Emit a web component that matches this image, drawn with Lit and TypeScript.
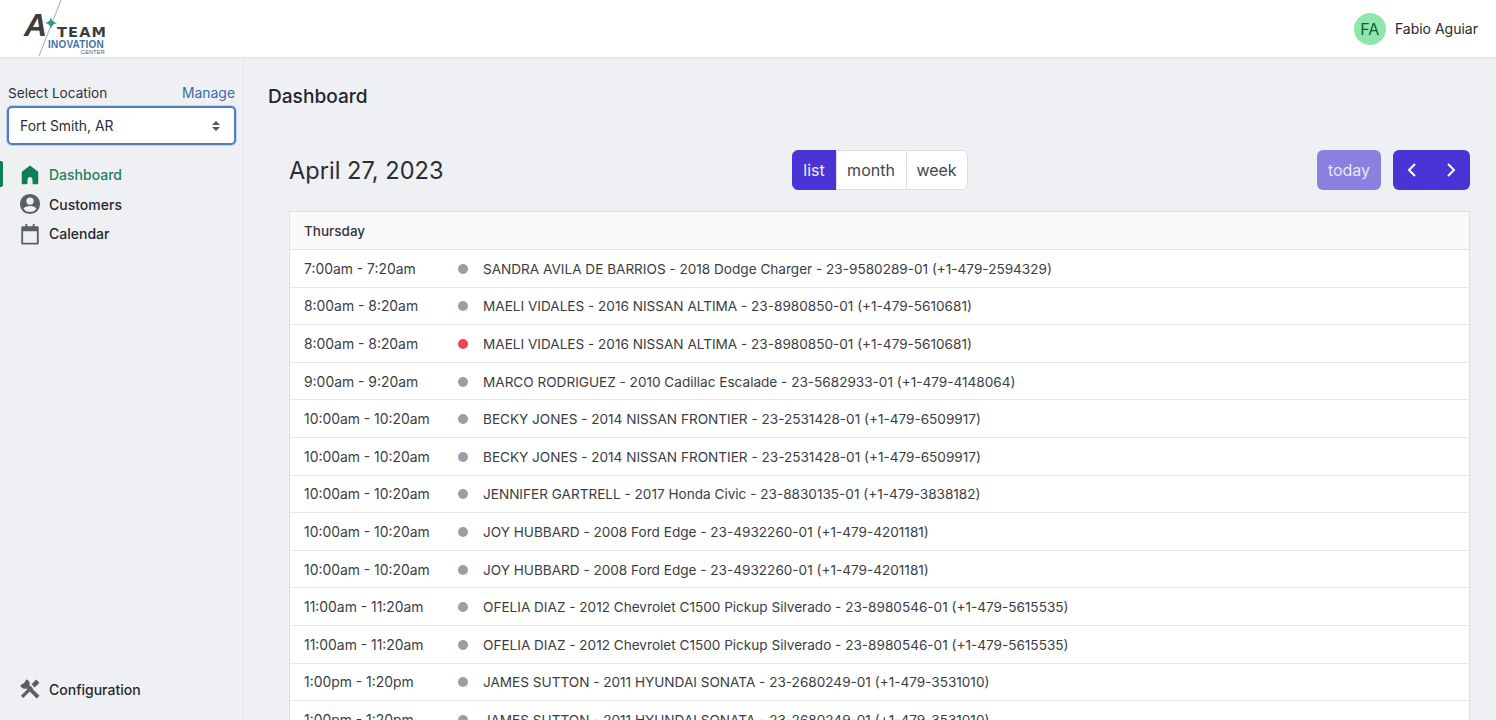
import { LitElement, html, css, svg } from "lit";
import { customElement } from "lit/decorators.js";

const rows: [string, string, boolean?][] = [
  ["7:00am - 7:20am", "SANDRA AVILA DE BARRIOS - 2018 Dodge Charger - 23-9580289-01 (+1-479-2594329)"],
  ["8:00am - 8:20am", "MAELI VIDALES - 2016 NISSAN ALTIMA - 23-8980850-01 (+1-479-5610681)"],
  ["8:00am - 8:20am", "MAELI VIDALES - 2016 NISSAN ALTIMA - 23-8980850-01 (+1-479-5610681)", true],
  ["9:00am - 9:20am", "MARCO RODRIGUEZ - 2010 Cadillac Escalade - 23-5682933-01 (+1-479-4148064)"],
  ["10:00am - 10:20am", "BECKY JONES - 2014 NISSAN FRONTIER - 23-2531428-01 (+1-479-6509917)"],
  ["10:00am - 10:20am", "BECKY JONES - 2014 NISSAN FRONTIER - 23-2531428-01 (+1-479-6509917)"],
  ["10:00am - 10:20am", "JENNIFER GARTRELL - 2017 Honda Civic - 23-8830135-01 (+1-479-3838182)"],
  ["10:00am - 10:20am", "JOY HUBBARD - 2008 Ford Edge - 23-4932260-01 (+1-479-4201181)"],
  ["10:00am - 10:20am", "JOY HUBBARD - 2008 Ford Edge - 23-4932260-01 (+1-479-4201181)"],
  ["11:00am - 11:20am", "OFELIA DIAZ - 2012 Chevrolet C1500 Pickup Silverado - 23-8980546-01 (+1-479-5615535)"],
  ["11:00am - 11:20am", "OFELIA DIAZ - 2012 Chevrolet C1500 Pickup Silverado - 23-8980546-01 (+1-479-5615535)"],
  ["1:00pm - 1:20pm", "JAMES SUTTON - 2011 HYUNDAI SONATA - 23-2680249-01 (+1-479-3531010)"],
  ["1:00pm - 1:20pm", "JAMES SUTTON - 2011 HYUNDAI SONATA - 23-2680249-01 (+1-479-3531010)"],
];

const homeIcon = svg`<path fill="currentColor" d="M12 1.500 3.400 8.300c-.3.2-.4.5-.4.8V21c0 .6.4 1 1 1h4.400c.5 0 .9-.4.9-.9v-4.300c0-1.500 1.200-2.700 2.700-2.700s2.700 1.200 2.700 2.700v4.300c0 .5.4.9.9.9H20c.6 0 1-.4 1-1V9.100c0-.3-.1-.6-.4-.8z"/>`;
const userIcon = svg`<path fill="currentColor" fill-rule="evenodd" d="M12 1a11 11 0 1 0 0 22 11 11 0 0 0 0-22zm0 3.800a4 4 0 1 1 0 8 4 4 0 0 1 0-8zm0 16c-3 0-5.500-1.400-7-3.600.1-1.700 4.300-3 7-3s6.900 1.300 7 3c-1.500 2.200-4 3.600-7 3.600z"/>`;
const calIcon = svg`<path fill="currentColor" fill-rule="evenodd" d="M7 1h2v2.500h6V1h2v2.500h3c.8 0 1.500.7 1.500 1.500v17c0 .8-.7 1.500-1.500 1.500H4c-.8 0-1.500-.7-1.500-1.500V5c0-.8.7-1.500 1.500-1.500h3zM4.500 9v12.500h15V9z"/>`;
const toolIcon = svg`<path fill="currentColor" d="M8 1.500 5.500 5.500 1.500 8c.5 3 3.500 4.500 7 3.500l3-3c1-3.500-.5-6.500-3.500-7z"/><path fill="none" stroke="currentColor" stroke-width="4.200" d="M8 8 20.800 20.800"/><path fill="none" stroke="currentColor" stroke-width="3.600" d="M3.400 20.600 14 10"/><path fill="none" stroke="currentColor" stroke-width="5" d="M15.500 8.500 20.500 3.500"/>`;

@customElement("app-root")
export class AppRoot extends LitElement {
  static styles = css`
    :host { display: flex; flex-direction: column; height: 100vh; overflow: hidden; background: #eff0f4; font-family: Inter, "Noto Sans", sans-serif; color: #2c2f36; font-size: 14px; }
    * { box-sizing: border-box; }
    .top { flex: none; height: 58px; background: #fff; border-bottom: 1px solid #dfe0e3; display: flex; align-items: center; justify-content: space-between; padding: 0 18px 0 23px; }
    .logo { position: relative; width: 84px; height: 57px; flex: none; overflow: hidden; }
    .logo svg { position: absolute; left: 0; top: 0; }
    .logo span { position: absolute; white-space: nowrap; font-family: "Liberation Sans", sans-serif; font-weight: 700; line-height: 1; }
    .logo .l-a { left: 1px; top: 9px; font-size: 32px; font-style: italic; color: #3c3d40; }
    .logo .l-team { left: 34px; top: 25px; font-family: "DejaVu Sans", sans-serif; font-size: 14.500px; color: #3c3d40; letter-spacing: 1.200px; }
    .logo .l-ino { left: 25px; top: 39.500px; font-size: 10px; color: #3f75a8; letter-spacing: .2px; }
    .logo .l-cen { left: 58px; top: 49.500px; font-size: 5.500px; color: #555; font-weight: 400; letter-spacing: .2px; }
    .user { display: flex; align-items: center; gap: 9px; font-size: 14px; color: #26282d; }
    .avatar { width: 32px; height: 32px; border-radius: 50%; background: #8fe6ac; color: #125a33; display: flex; align-items: center; justify-content: center; font-size: 16px; }
    .body { flex: 1; display: flex; min-height: 0; }
    .side { flex: none; width: 244px; border-right: 1px solid #e3e4e8; display: flex; flex-direction: column; padding: 27px 0 16px; }
    .loc-head { display: flex; justify-content: space-between; padding: 0 8px; font-size: 13.600px; line-height: 17px; color: #2f3136; }
    .manage { color: #3a6cab; font-size: 13.900px; }
    .select { margin: 4px 7px 0; height: 39px; width: 229px; background: #fff; border: 2px solid #4e7cbc; border-radius: 5px; box-shadow: 0 0 0 1px #c4d3e8; display: flex; align-items: center; justify-content: space-between; padding: 0 14px 0 11px; font-size: 13.900px; color: #2c2f36; }
    .carets { display: flex; flex-direction: column; gap: 2px; }
    .up { width: 0; height: 0; border: 4px solid transparent; border-top: 0; border-bottom: 4px solid #555; }
    .down { width: 0; height: 0; border: 4px solid transparent; border-bottom: 0; border-top: 4px solid #555; }
    nav { margin-top: 15px; display: flex; flex-direction: column; gap: 0; }
    .item { position: relative; display: flex; align-items: center; gap: 8px; height: 29.600px; padding-left: 19px; font-size: 14px; font-weight: 500; color: #26282d; }
    .item svg { width: 22px; height: 22px; color: #5b5e69; flex: none; }
    .item.active { color: #22825c; }
    .item.active svg { color: #0e7f55; }
    .item.active::before { content: ""; position: absolute; left: 0; top: 1px; width: 3px; height: 26px; background: #0e7f55; border-radius: 0 2px 2px 0; }
    .spacer { flex: 1; }
    .main { flex: 1; min-width: 0; padding: 26px 26px 0 24px; overflow: hidden; }
    h1 { margin: 0; font-size: 19.100px; line-height: 24px; font-weight: 500; color: #25272c; }
    .toolbar { margin: 42px 0 0 21px; height: 40px; display: grid; grid-template-columns: 1fr auto 1fr; align-items: center; }
    .title { font-size: 23.600px; font-weight: 400; color: #2b2d33; }
    .group { display: flex; height: 40px; font-size: 16px; }
    .group div { display: flex; align-items: center; justify-content: center; background: #fff; border: 1px solid #dcdde1; color: #44464c; margin-left: -1px; }
    .group .list { width: 45px; background: #4a34d6; border-color: #4a34d6; color: #f1effd; border-radius: 6px 0 0 6px; margin-left: 0; }
    .group .month { width: 71px; }
    .group .week { width: 62px; border-radius: 0 6px 6px 0; }
    .right { display: flex; justify-content: flex-end; gap: 12px; }
    .today { width: 64px; height: 40px; border-radius: 6px; background: #8a80e0; color: #e8e6f8; display: flex; align-items: center; justify-content: center; font-size: 16px; }
    .nav { width: 77px; height: 40px; border-radius: 6px; background: #4a34d6; display: flex; align-items: center; justify-content: space-between; padding: 0 12px; }
    .nav svg { width: 14px; height: 18px; }
    .table { margin: 21px 0 0 21px; background: #fff; border: 1px solid #dfe0e4; }
    .thead { height: 38px; background: #fafafa; border-bottom: 1px solid #e4e5e8; display: flex; align-items: center; padding-left: 14px; font-size: 13.500px; font-weight: 500; color: #33353a; }
    .row { height: 37.600px; border-bottom: 1px solid #e6e7ea; display: flex; align-items: center; padding: 1px 0 0 14px; font-size: 13.900px; color: #3b3d43; white-space: nowrap; }
    .time { width: 154px; flex: none; }
    .dot { width: 10px; height: 10px; border-radius: 50%; background: #9a9ea8; flex: none; margin-right: 15px; }
    .dot.red { background: #ef4458; }
    .desc { font-size: 13.580px; }
  `;

  render() {
    return html`
      <header class="top">
        <div class="logo">
          <span class="l-a">A</span><span class="l-team">TEAM</span><span class="l-ino">INOVATION</span><span class="l-cen">CENTER</span>
          <svg width="84" height="57" viewBox="0 0 84 57">
            <path d="M16 56 38 0" stroke="#7f9c90" stroke-width=".8" fill="none"/>
            <path fill="#2c9a83" d="M28 17c.6 3.500 2 5 6 6-3.500.8-5.200 2.400-6.200 6-.6-3.500-2-5.200-5.800-6 3.700-1 5.300-2.500 6-6z" />
          </svg>
        </div>
        <div class="user"><div class="avatar">FA</div>Fabio Aguiar</div>
      </header>
      <div class="body">
        <aside class="side">
          <div class="loc-head"><span>Select Location</span><span class="manage">Manage</span></div>
          <div class="select"><span>Fort Smith, AR</span><div class="carets"><div class="up"></div><div class="down"></div></div></div>
          <nav>
            <div class="item active"><svg viewBox="0 0 24 24">${homeIcon}</svg>Dashboard</div>
            <div class="item"><svg viewBox="0 0 24 24">${userIcon}</svg>Customers</div>
            <div class="item"><svg viewBox="0 0 24 24">${calIcon}</svg>Calendar</div>
          </nav>
          <div class="spacer"></div>
          <div class="item"><svg viewBox="0 0 24 24">${toolIcon}</svg>Configuration</div>
        </aside>
        <main class="main">
          <h1>Dashboard</h1>
          <div class="toolbar">
            <div class="title">April 27, 2023</div>
            <div class="group"><div class="list">list</div><div class="month">month</div><div class="week">week</div></div>
            <div class="right">
              <div class="today">today</div>
              <div class="nav">
                <svg viewBox="0 0 14 18"><path d="M10 3 4 9l6 6" fill="none" stroke="#fff" stroke-width="2"/></svg>
                <svg viewBox="0 0 14 18"><path d="m4 3 6 6-6 6" fill="none" stroke="#fff" stroke-width="2"/></svg>
              </div>
            </div>
          </div>
          <div class="table">
            <div class="thead">Thursday</div>
            ${rows.map(([t, d, red]) => html`<div class="row"><div class="time">${t}</div><div class="dot ${red ? "red" : ""}"></div><div class="desc">${d}</div></div>`)}
          </div>
        </main>
      </div>
    `;
  }
}
